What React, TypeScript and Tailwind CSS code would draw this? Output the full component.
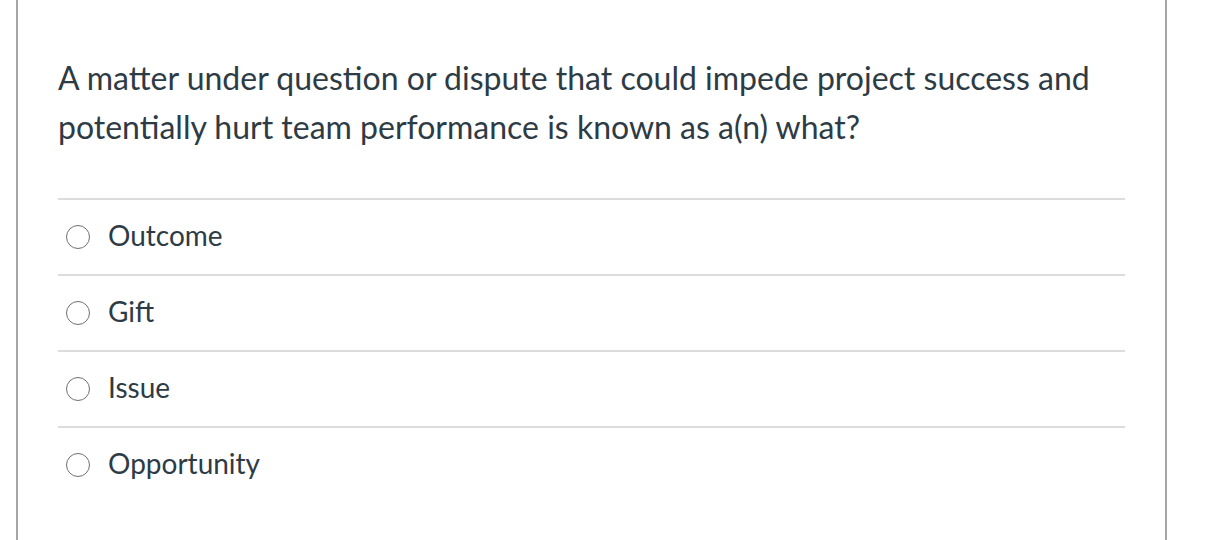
import React from 'react';

const options = ['Outcome', 'Gift', 'Issue', 'Opportunity'];

export default function App() {
  return (
    <div className="min-h-[540px] bg-white pl-4 overflow-hidden" style={{ fontFamily: 'Lato, "Noto Sans", sans-serif' }}>
      <div className="w-[1151px] min-h-[600px] border-x-2 border-[#a5a5a5] px-[40px] pt-[53px]">
        {/* Question */}
        <p className="text-[32px] leading-[49px] text-[#2d3b45]">
          A matter under question or dispute that could impede project success and potentially hurt team performance is known as a(n) what?
        </p>

        {/* Answers */}
        <div className="mt-[47px]">
          {options.map((opt) => (
            <label
              key={opt}
              className="flex items-center h-[76px] border-t-2 border-[#dcdcdc] pl-[8px] cursor-pointer"
            >
              <span className="w-[24px] h-[24px] rounded-full border-[1.5px] border-[#6f6f6f] bg-white shrink-0" />
              <span className="ml-[18px] text-[28px] leading-[34px] text-[#2d3b45] -mt-[5px]">{opt}</span>
            </label>
          ))}
        </div>
      </div>
    </div>
  );
}
